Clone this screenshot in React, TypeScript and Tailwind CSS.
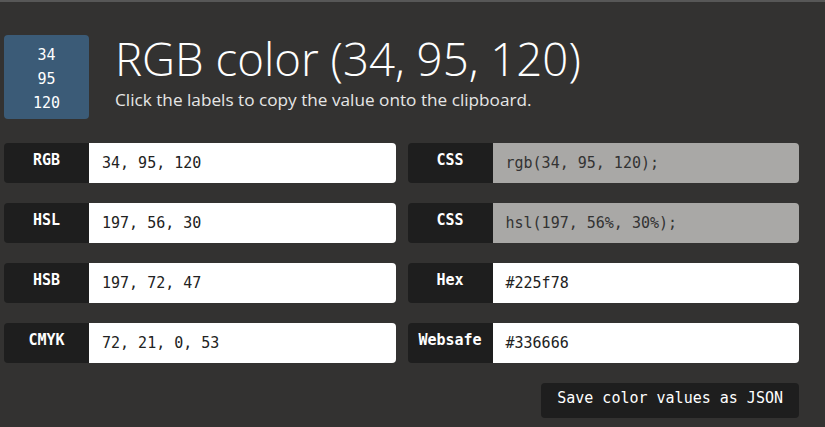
const mono = "font-['DejaVu_Sans_Mono','Liberation_Mono',monospace]";

interface Field {
  label: string;
  value: string;
  readOnly?: boolean;
}

const left: Field[] = [
  { label: "RGB", value: "34, 95, 120" },
  { label: "HSL", value: "197, 56, 30" },
  { label: "HSB", value: "197, 72, 47" },
  { label: "CMYK", value: "72, 21, 0, 53" },
];

const right: Field[] = [
  { label: "CSS", value: "rgb(34, 95, 120);", readOnly: true },
  { label: "CSS", value: "hsl(197, 56%, 30%);", readOnly: true },
  { label: "Hex", value: "#225f78" },
  { label: "Websafe", value: "#336666" },
];

function Row({ field }: { field: Field }) {
  return (
    <div className="flex h-10">
      <div className={`flex w-[85px] shrink-0 items-center justify-center rounded-l-[4px] bg-[#1e1e1e] pb-1.5 text-[15px] font-bold text-white ${mono}`}>
        {field.label}
      </div>
      <div
        className={`flex flex-1 items-center rounded-r-[4px] pl-[13px] text-[15px] ${mono} ${
          field.readOnly ? "bg-[#a9a8a6] text-[#333]" : "bg-white text-[#222]"
        }`}
      >
        {field.value}
      </div>
    </div>
  );
}

export default function App() {
  return (
    <div className="h-[427px] w-[825px] border-t-2 border-[#575757] bg-[#333231]">
      <div className="flex pl-1 pt-[33px]">
        <div className={`flex h-[84px] w-[85px] flex-col items-center justify-center rounded-[4px] bg-[#3b5b77] pt-1 text-[15px] leading-6 text-white ${mono}`}>
          <span>34</span>
          <span>95</span>
          <span>120</span>
        </div>
        <div className="ml-[26px] font-['Open_Sans',sans-serif] text-white">
          <h1 className="mt-[-4px] text-[45.6px] font-light leading-[54px]">RGB color (34, 95, 120)</h1>
          <p className="mt-[2px] text-[17.2px] text-[#e6e6e6]">Click the labels to copy the value onto the clipboard.</p>
        </div>
      </div>
      <div className="mt-6 grid w-[799px] grid-cols-2 gap-x-3 gap-y-5 pl-1">
        <div className="flex flex-col gap-5">
          {left.map((f) => (
            <Row field={f} key={f.label} />
          ))}
        </div>
        <div className="flex flex-col gap-5">
          {right.map((f, i) => (
            <Row field={f} key={i} />
          ))}
        </div>
      </div>
      <div className="mt-5 flex w-[799px] justify-end">
        <button className={`h-[35px] rounded-[4px] bg-[#1e1e1e] px-4 pb-1 text-[15px] text-white ${mono}`}>
          Save color values as JSON
        </button>
      </div>
    </div>
  );
}
